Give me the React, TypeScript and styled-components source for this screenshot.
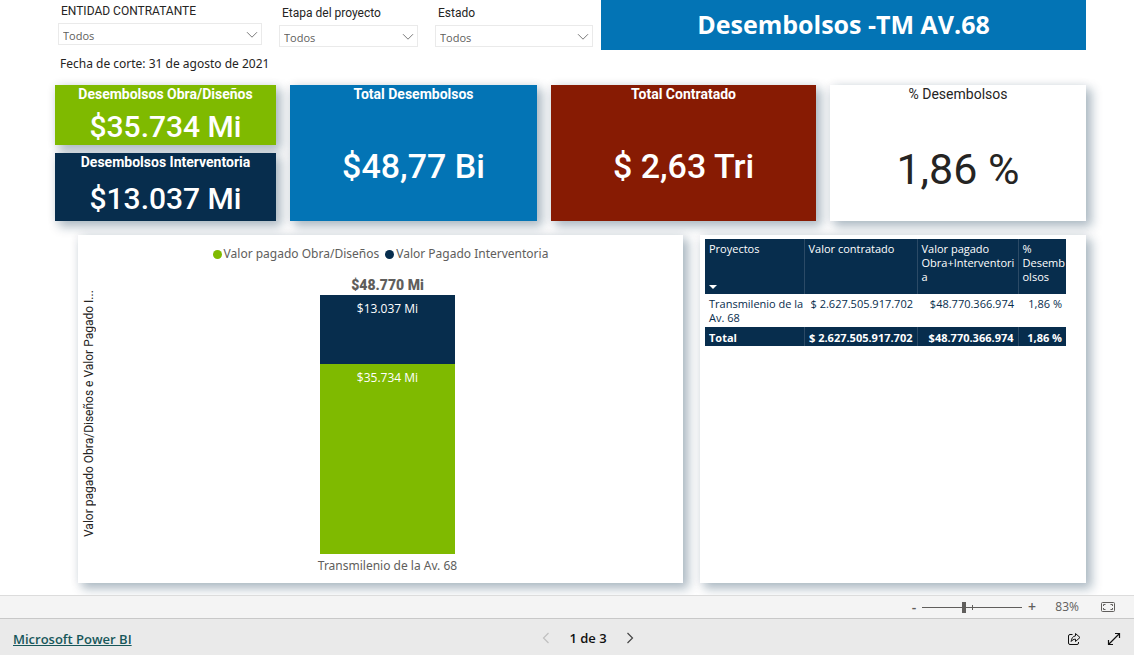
import React, { useState } from "react";
import styled, { createGlobalStyle } from "styled-components";

const colors = {
  green: "#7fba00",
  navy: "#072d4d",
  blue: "#0374b5",
  red: "#871b03",
  ink: "#252423",
  muted: "#605e5c",
};

const din = `Roboto, "Liberation Sans", sans-serif`;
const ui = `"Noto Sans", "Open Sans", sans-serif`;
const compact = `"Open Sans", "Noto Sans", sans-serif`;
const shadow = "5px 5px 10px 1px rgba(7, 45, 77, 0.3), 0 0 10px rgba(7, 45, 77, 0.07)";

const GlobalStyle = createGlobalStyle`
  * { box-sizing: border-box; }
  body { margin: 0; background: #fff; color: ${colors.ink}; font-family: ${ui}; }
`;

const Page = styled.div`
  display: flex;
  flex-direction: column;
  min-height: 100vh;
`;

const Report = styled.main`
  flex: 1;
  display: flex;
  flex-direction: column;
  padding: 0 48px 12px 55px;
`;

const Header = styled.header`
  display: grid;
  grid-template-columns: 546fr 485fr;
  height: 50px;
`;

const Filters = styled.div`
  display: grid;
  grid-template-columns: 204fr 139fr 158fr;
  gap: 17px;
  padding: 0 8px 0 3px;
`;

const Filter = styled.div<{ $top: number }>`
  padding-top: ${(p) => p.$top}px;
`;

const FilterLabel = styled.label`
  display: block;
  padding-left: 3px;
  font: 12px/16px ${din};
  height: 20px;
`;

const SelectBox = styled.div`
  position: relative;
`;

const Select = styled.select`
  appearance: none;
  display: block;
  width: 100%;
  height: 22px;
  padding: 3px 24px 0 4px;
  border: 1px solid #eaeaea;
  border-radius: 0;
  background: #fff;
  color: ${colors.muted};
  font: 11px/18px ${compact};
`;

const Chevron = styled.svg`
  position: absolute;
  right: 4px;
  top: 8px;
  pointer-events: none;
`;

const Title = styled.h1`
  margin: 0;
  background: ${colors.blue};
  color: #fff;
  font: 700 25px/48px ${compact};
  text-align: center;
`;

const CutoffDate = styled.p`
  margin: 0;
  padding: 5px 0 0 5px;
  height: 35px;
  font-size: 12px;
  line-height: 18px;
`;

const Cards = styled.section`
  display: grid;
  grid-template-columns: 221fr 247fr 265fr 256fr;
  gap: 14px;
  height: 136px;
`;

const CardStack = styled.div`
  display: grid;
  grid-template-rows: 60fr 67fr;
  gap: 8px;
`;

const CardBox = styled.article<{ $bg: string; $fg: string }>`
  display: flex;
  flex-direction: column;
  align-items: center;
  background: ${(p) => p.$bg};
  color: ${(p) => p.$fg};
  box-shadow: ${shadow};
  font-family: ${din};
`;

const CardTitle = styled.h2<{ $weight: number }>`
  margin: 0;
  font-size: 14px;
  font-weight: ${(p) => p.$weight};
  line-height: 18px;
`;

const CardValue = styled.div<{ $size: number }>`
  flex: 1;
  display: flex;
  align-items: center;
  padding-top: ${(p) => (p.$size > 40 ? 14 : p.$size > 30 ? 8 : 6)}px;
  font-size: ${(p) => p.$size}px;
  font-weight: ${(p) => (p.$size > 40 ? 400 : 500)};
  line-height: 36px;
`;

const Panels = styled.section`
  flex: 1;
  display: grid;
  grid-template-columns: 605fr 386fr;
  gap: 17px;
  padding: 14px 0 0 23px;
`;

const Panel = styled.article`
  background: #fff;
  box-shadow: ${shadow};
`;

const ChartPanel = styled(Panel)`
  display: flex;
  flex-direction: column;
  padding: 10px 4px 8px;
`;

const Legend = styled.ul`
  display: flex;
  justify-content: center;
  gap: 6px;
  margin: 0;
  padding: 0;
  list-style: none;
  color: ${colors.muted};
  font-size: 12px;
  line-height: 18px;
`;

const LegendItem = styled.li<{ $color: string }>`
  display: flex;
  align-items: center;
  gap: 2px;
  &::before {
    content: "";
    width: 9px;
    height: 9px;
    border-radius: 50%;
    background: ${(p) => p.$color};
  }
`;

const ChartBody = styled.div`
  flex: 1;
  display: flex;
  padding-top: 13px;
`;

const AxisTitle = styled.div`
  writing-mode: vertical-rl;
  transform: rotate(180deg);
  text-align: center;
  padding-top: 24px;
  font: 12px/14px ${din};
`;

const Plot = styled.div`
  flex: 1;
  display: flex;
  flex-direction: column;
  align-items: center;
`;

const BarTotal = styled.div`
  color: ${colors.muted};
  font: 900 14px/18px ${din};
  height: 19px;
`;

const Bar = styled.div`
  flex: 1;
  display: flex;
  flex-direction: column;
  width: 23%;
`;

const Segment = styled.div<{ $color: string; $share: number }>`
  flex: ${(p) => p.$share} 0 0;
  background: ${(p) => p.$color};
  color: #fff;
  font: 12px/28px ${compact};
  text-align: center;
`;

const Category = styled.div`
  padding-top: 3px;
  color: ${colors.muted};
  font-size: 12px;
  line-height: 18px;
`;

const TablePanel = styled(Panel)`
  padding: 4px 20px 4px 5px;
`;

const Table = styled.table`
  width: 100%;
  table-layout: fixed;
  border-collapse: collapse;
  font: 11px/14px ${compact};

  th, td {
    padding: 3px 4px;
    vertical-align: top;
    text-align: right;
    white-space: nowrap;
  }
  thead th {
    height: 55px;
    padding-right: 0;
    background: ${colors.navy};
    border-left: 1px solid #2b4a66;
    color: #fff;
    font-weight: 400;
    text-align: left;
    white-space: normal;
    overflow-wrap: anywhere;
  }
  tbody td { padding-bottom: 2px; color: ${colors.navy}; }
  tbody td:first-child, tfoot th {
    padding-right: 0;
    text-align: left;
    white-space: normal;
  }
  tfoot th, tfoot td {
    height: 19px;
    padding: 4px 4px 1px;
    background: ${colors.navy};
    border-left: 1px solid #2b4a66;
    color: #fff;
    font-weight: 700;
  }
  thead th:first-child, tfoot th { border-left: 0; }
`;

const Column = styled.col<{ $share: number }>`
  width: ${(p) => p.$share}px;
`;

const SortableHead = styled.div`
  display: flex;
  flex-direction: column;
  justify-content: space-between;
  height: 49px;
`;

const StatusBar = styled.div`
  display: flex;
  align-items: center;
  justify-content: flex-end;
  height: 23px;
  padding-right: 18px;
  border-top: 1px solid #dcdcdc;
  background: #f4f4f4;
  color: ${colors.muted};
`;

const IconButton = styled.button`
  display: flex;
  align-items: center;
  justify-content: center;
  width: 16px;
  height: 20px;
  padding: 0;
  border: 0;
  background: none;
  color: inherit;
  font: 600 14px/20px ${compact};
`;

const ZoomSlider = styled.input`
  appearance: none;
  width: 100px;
  height: 12px;
  margin: 0 2px 0 0;
  background:
    linear-gradient(${colors.muted}, ${colors.muted}) 0 6px / 100% 1px no-repeat,
    linear-gradient(${colors.muted}, ${colors.muted}) 50% 4px / 1px 5px no-repeat;
  &::-webkit-slider-thumb {
    appearance: none;
    width: 4px;
    height: 11px;
    background: ${colors.muted};
  }
`;

const ZoomValue = styled.output`
  width: 39px;
  margin-right: 21px;
  font: 12px/18px ${compact};
  text-align: right;
`;

const Footer = styled.footer`
  display: grid;
  grid-template-columns: 1fr auto 1fr;
  align-items: center;
  height: 37px;
  padding: 0 12px;
  border-top: 1px solid #c8c8c8;
  background: #eaeaea;
  font: 600 13px/20px ${compact};
`;

const BrandLink = styled.a`
  justify-self: start;
  padding: 3px 0 0 1px;
  color: #17575a;
`;

const Pager = styled.nav`
  display: flex;
  align-items: center;
  gap: 15px;
  padding: 2px 0 0 42px;
  color: #111;
`;

const Actions = styled.div`
  display: flex;
  justify-content: flex-end;
  gap: 24px;
  padding-top: 3px;
  color: #111;
`;

const filters = [
  { id: "entidad", label: "ENTIDAD CONTRATANTE", top: 3 },
  { id: "etapa", label: "Etapa del proyecto", top: 5 },
  { id: "estado", label: "Estado", top: 5 },
];

const segments = [
  { name: "Valor Pagado Interventoria", value: 13037, label: "$13.037 Mi", color: colors.navy },
  { name: "Valor pagado Obra/Diseños", value: 35734, label: "$35.734 Mi", color: colors.green },
];

type CardProps = { title: string; value: string; bg: string; size: number; fg?: string; weight?: number };

const Card = ({ title, value, bg, size, fg = "#fff", weight = 700 }: CardProps) => (
  <CardBox $bg={bg} $fg={fg}>
    <CardTitle $weight={weight}>{title}</CardTitle>
    <CardValue $size={size}>{value}</CardValue>
  </CardBox>
);

const PageArrow = ({ d, color }: { d: string; color: string }) => (
  <svg width="8" height="12" viewBox="0 0 8 12" fill="none" stroke={color} strokeWidth="1.2">
    <path d={d} />
  </svg>
);

export default function App() {
  const [zoom, setZoom] = useState(83);
  return (
    <Page>
      <GlobalStyle />
      <Report>
        <Header>
          <Filters>
            {filters.map((f) => (
              <Filter key={f.id} $top={f.top}>
                <FilterLabel htmlFor={f.id}>{f.label}</FilterLabel>
                <SelectBox>
                  <Select id={f.id}>
                    <option>Todos</option>
                  </Select>
                  <Chevron width="12" height="8" viewBox="0 0 12 8" fill="none" stroke="#7a7a7a">
                    <path d="M1 1.2 6 6.2 11 1.2" />
                  </Chevron>
                </SelectBox>
              </Filter>
            ))}
          </Filters>
          <Title>Desembolsos -TM AV.68</Title>
        </Header>
        <CutoffDate>Fecha de corte: 31 de agosto de 2021</CutoffDate>

        <Cards>
          <CardStack>
            <Card title="Desembolsos Obra/Diseños" value="$35.734 Mi" bg={colors.green} size={30} />
            <Card title="Desembolsos Interventoria" value="$13.037 Mi" bg={colors.navy} size={30} />
          </CardStack>
          <Card title="Total Desembolsos" value="$48,77 Bi" bg={colors.blue} size={34} />
          <Card title="Total Contratado" value="$ 2,63 Tri" bg={colors.red} size={34} />
          <Card title="% Desembolsos" value="1,86 %" bg="#fff" fg={colors.ink} size={43} weight={400} />
        </Cards>

        <Panels>
          <ChartPanel>
            <Legend>
              {[...segments].reverse().map((s) => (
                <LegendItem key={s.name} $color={s.color}>{s.name}</LegendItem>
              ))}
            </Legend>
            <ChartBody>
              <AxisTitle>Valor pagado Obra/Diseños e Valor Pagado I...</AxisTitle>
              <Plot>
                <BarTotal>$48.770 Mi</BarTotal>
                <Bar>
                  {segments.map((s) => (
                    <Segment key={s.name} $color={s.color} $share={s.value}>{s.label}</Segment>
                  ))}
                </Bar>
                <Category>Transmilenio de la Av. 68</Category>
              </Plot>
            </ChartBody>
          </ChartPanel>

          <TablePanel>
            <Table>
              <colgroup>
                <Column $share={99} />
                <Column $share={113} />
                <Column $share={101} />
                <Column $share={48} />
              </colgroup>
              <thead>
                <tr>
                  <th scope="col">
                    <SortableHead>
                      Proyectos
                      <svg width="8" height="8" viewBox="0 0 8 8" fill="#fff"><path d="M0 2h8L4 6z" /></svg>
                    </SortableHead>
                  </th>
                  <th scope="col">Valor contratado</th>
                  <th scope="col">Valor pagado Obra+Interventoria</th>
                  <th scope="col">% Desembolsos</th>
                </tr>
              </thead>
              <tbody>
                <tr>
                  <td>Transmilenio de la Av. 68</td>
                  <td>$ 2.627.505.917.702</td>
                  <td>$48.770.366.974</td>
                  <td>1,86 %</td>
                </tr>
              </tbody>
              <tfoot>
                <tr>
                  <th scope="row">Total</th>
                  <td>$ 2.627.505.917.702</td>
                  <td>$48.770.366.974</td>
                  <td>1,86 %</td>
                </tr>
              </tfoot>
            </Table>
          </TablePanel>
        </Panels>
      </Report>

      <StatusBar>
        <IconButton aria-label="Alejar" onClick={() => setZoom(Math.max(0, zoom - 10))}>-</IconButton>
        <ZoomSlider
          type="range"
          aria-label="Zoom"
          min={0}
          max={200}
          value={zoom}
          onChange={(e) => setZoom(Number(e.target.value))}
        />
        <IconButton aria-label="Acercar" onClick={() => setZoom(Math.min(200, zoom + 10))}>+</IconButton>
        <ZoomValue>{zoom}%</ZoomValue>
        <IconButton aria-label="Ajustar a la página">
          <svg width="16" height="12" viewBox="0 0 16 12" fill="none" stroke={colors.muted}>
            <rect x="1.5" y="1.5" width="13" height="9" rx="1" />
            <path d="M3.5 5V3.5H5.5M10.5 3.5H12.5V5M12.5 7V8.5H10.5M5.5 8.5H3.5V7" />
          </svg>
        </IconButton>
      </StatusBar>

      <Footer>
        <BrandLink href="#powerbi">Microsoft Power BI</BrandLink>
        <Pager>
          <IconButton aria-label="Página anterior" disabled>
            <PageArrow d="M6.5 1l-5 5 5 5" color="#c0c0c0" />
          </IconButton>
          <span>1 de 3</span>
          <IconButton aria-label="Página siguiente">
            <PageArrow d="M1.5 1l5 5-5 5" color="#444" />
          </IconButton>
        </Pager>
        <Actions>
          <IconButton aria-label="Compartir">
            <svg width="14" height="14" viewBox="0 0 14 14" fill="none" stroke="currentColor" strokeLinejoin="round">
              <path d="M5.5 2.500H3A1.500 1.500 0 0 0 1.500 4v7A1.500 1.500 0 0 0 3 12.500h7a1.500 1.500 0 0 0 1.500-1.500v-1" />
              <path d="M8.500 1.500l4.500 4-4.500 4V7.200C6.500 7.200 5.200 8 4.200 9.500 4.300 6.500 5.800 4.200 8.500 3.900z" />
            </svg>
          </IconButton>
          <IconButton aria-label="Pantalla completa">
            <svg width="14" height="14" viewBox="0 0 14 14" fill="none" stroke="currentColor" strokeWidth="1.2">
              <path d="M1.5 12.500l11-11M8 1.500h4.500V6M1.500 8v4.500H6" />
            </svg>
          </IconButton>
        </Actions>
      </Footer>
    </Page>
  );
}
